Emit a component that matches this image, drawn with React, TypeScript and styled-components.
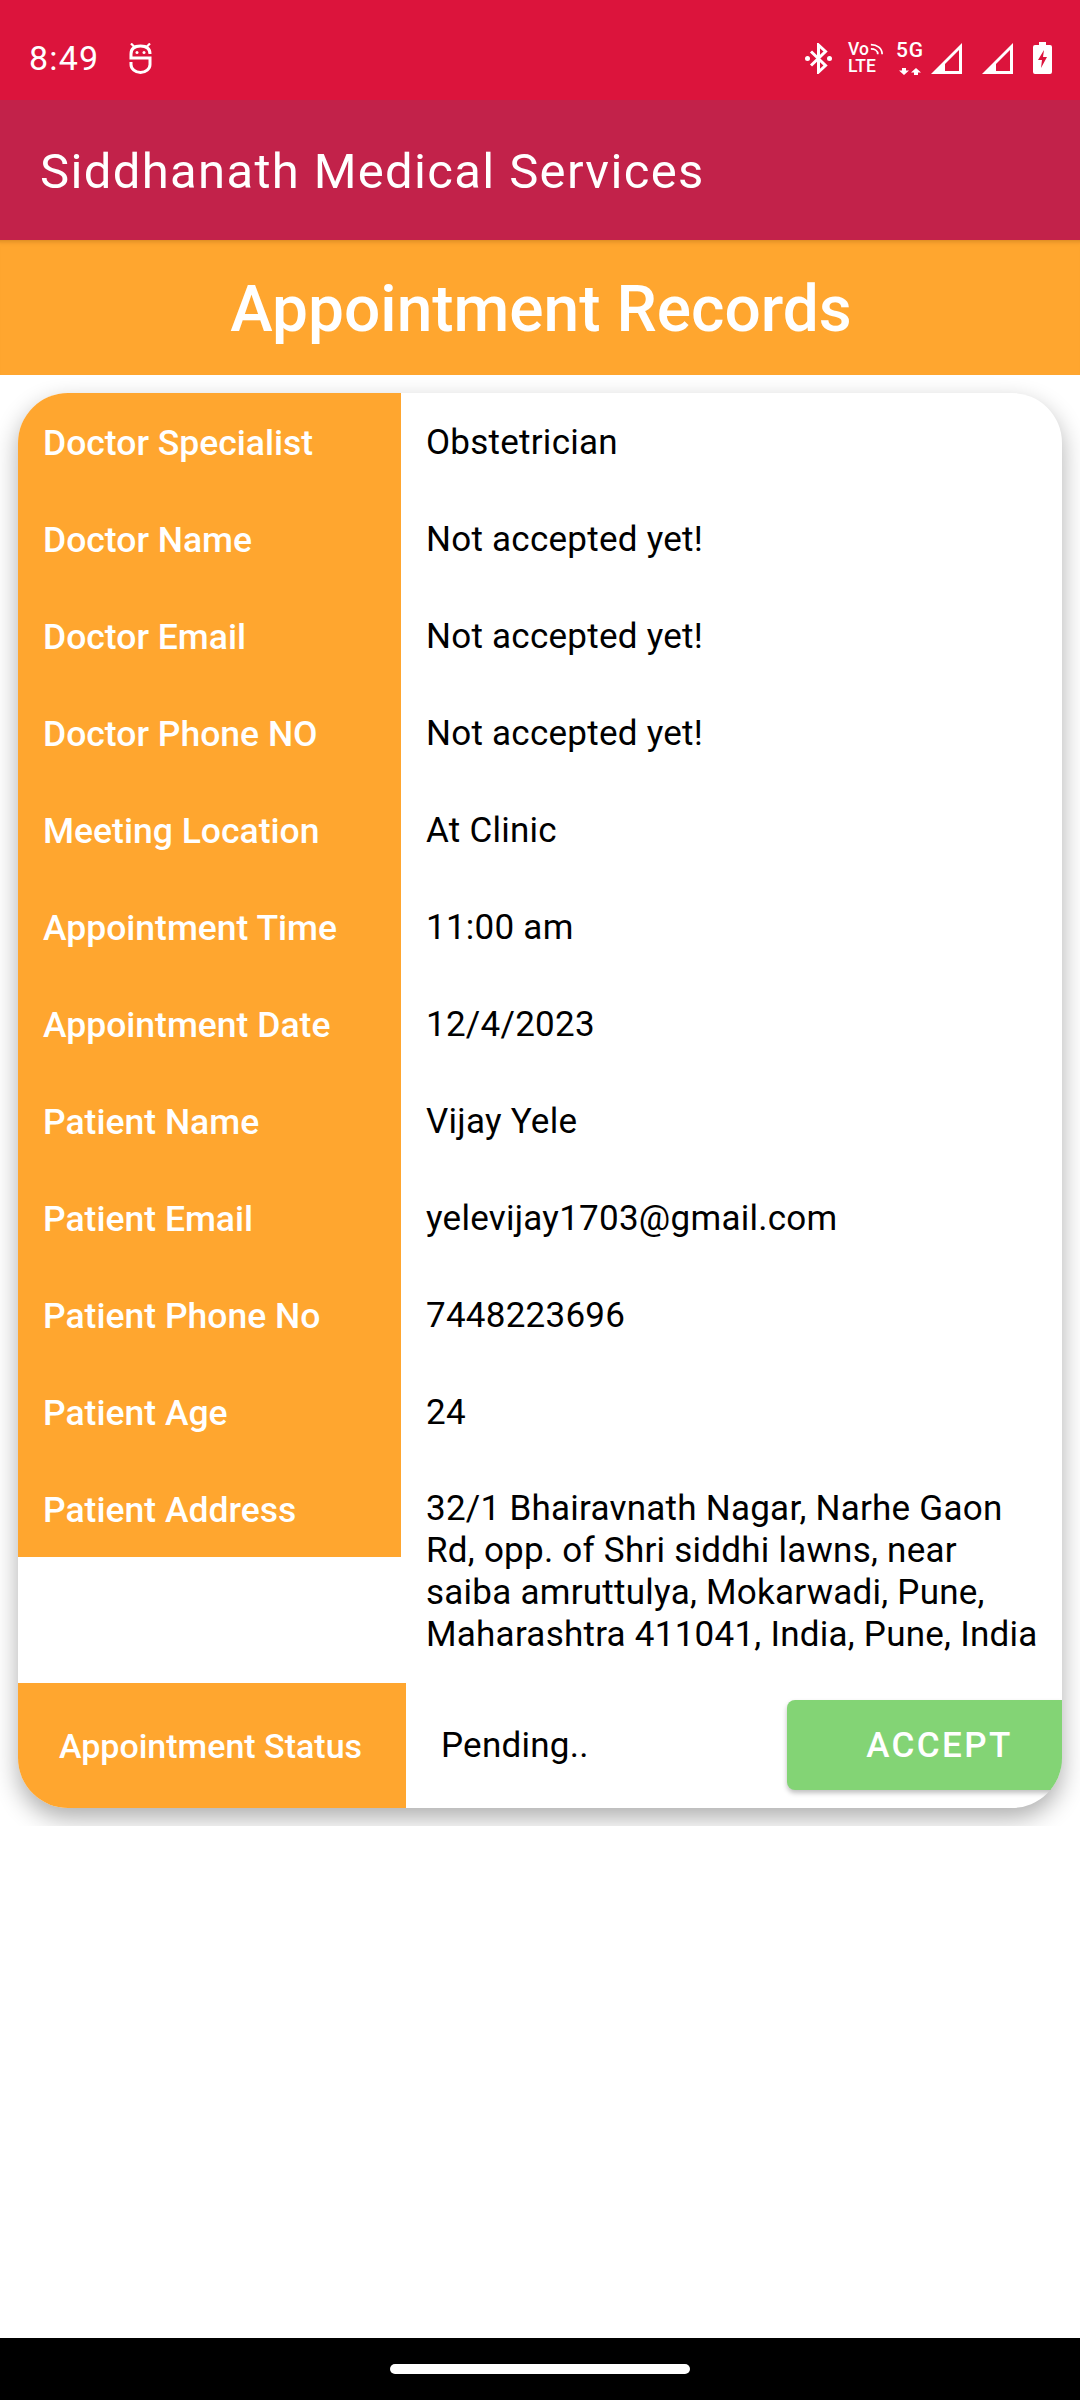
import styled, { createGlobalStyle } from 'styled-components'

const GlobalStyle = createGlobalStyle`
  html, body {
    margin: 0;
    padding: 0;
    background: #fff;
    font-family: 'Roboto', 'Liberation Sans', sans-serif;
  }
  * {
    box-sizing: border-box;
  }
`

const Screen = styled.div`
  width: 1080px;
  height: 2400px;
  display: flex;
  flex-direction: column;
  background: #fff;
`

const StatusBar = styled.div`
  height: 100px;
  flex: none;
  background: #dc143c;
  color: #fff;
  display: flex;
  align-items: center;
  padding: 16px 28px 0 29px;
`

const Clock = styled.span`
  font-size: 34px;
  letter-spacing: 1.2px;
  margin-right: 30px;
`

const StatusRight = styled.div`
  margin-left: auto;
  display: flex;
  align-items: center;
`

const IconSlot = styled.div<{ $left?: number }>`
  display: flex;
  margin-left: ${(p) => p.$left ?? 0}px;
`

const VoLte = styled.div`
  width: 35px;
  display: flex;
  flex-direction: column;
  gap: 2px;
  font-size: 17.5px;
  font-weight: 500;
  line-height: 15px;
  white-space: nowrap;
`

const VoLine = styled.div`
  display: flex;
  align-items: flex-start;
  justify-content: space-between;
`

const FiveG = styled.div`
  width: 30px;
  display: flex;
  flex-direction: column;
  align-items: center;
  gap: 9px;
  font-size: 21px;
  font-weight: 500;
  letter-spacing: 1px;
  line-height: 17px;
`

const AppBar = styled.div`
  height: 140px;
  flex: none;
  background: #c2224a;
  display: flex;
  align-items: center;
  padding: 2px 0 0 40px;
`

const AppTitle = styled.h1`
  margin: 0;
  font-size: 49px;
  font-weight: 400;
  letter-spacing: 1.35px;
  color: #fff;
`

const TitleBar = styled.div`
  height: 135px;
  flex: none;
  background: #ffa62f;
  box-shadow: inset 0 6px 5px -5px rgba(120, 70, 0, 0.35);
  padding: 3px 0 0 2px;
  display: flex;
  align-items: center;
  justify-content: center;
`

const PageTitle = styled.h2`
  margin: 0;
  font-size: 64px;
  font-weight: 500;
  color: #fff;
`

const Content = styled.div`
  flex: none;
  height: 1451px;
  padding: 18px 18px 0;
  overflow: hidden;
`

const Card = styled.div`
  height: 1415px;
  border-radius: 50px;
  overflow: hidden;
  background: #fff;
  box-shadow: 0 10px 24px rgba(0, 0, 0, 0.32);
  display: flex;
  flex-direction: column;
`

const Row = styled.div<{ $tall?: boolean }>`
  display: flex;
  align-items: flex-start;
  height: ${(p) => (p.$tall ? '223px' : '97px')};
  flex: none;
`

const Label = styled.div`
  width: 383px;
  height: 97px;
  flex: none;
  background: #ffa62f;
  color: #fff;
  font-size: 35.5px;
  font-weight: 500;
  padding: 2px 0 0 25px;
  display: flex;
  align-items: center;
`

const Value = styled.div<{ $multi?: boolean }>`
  flex: 1;
  min-height: 97px;
  color: #000;
  font-size: 35px;
  letter-spacing: 0.25px;
  line-height: 42px;
  padding: ${(p) => (p.$multi ? '28px' : '2px')} 20px 0 25px;
  display: flex;
  align-items: ${(p) => (p.$multi ? 'flex-start' : 'center')};
`

const StatusRow = styled.div`
  flex: 1;
  display: flex;
  align-items: center;
`

const StatusLabel = styled.div`
  width: 388px;
  height: 100%;
  flex: none;
  background: #ffa62f;
  color: #fff;
  font-size: 34px;
  font-weight: 500;
  padding-right: 3px;
  display: flex;
  align-items: center;
  justify-content: center;
`

const StatusValue = styled.div`
  flex: 1;
  padding-left: 35px;
  color: #000;
  font-size: 35px;
  letter-spacing: 0.25px;
`

const AcceptButton = styled.button`
  width: 275px;
  height: 90px;
  flex: none;
  margin-bottom: 1px;
  border: 0;
  border-radius: 8px 0 0 8px;
  background: #83d475;
  color: #fff;
  font-family: inherit;
  font-size: 35px;
  font-weight: 500;
  letter-spacing: 2.4px;
  padding: 0 0 0 30px;
  box-shadow: 0 3px 5px rgba(0, 0, 0, 0.25);
`

const Spacer = styled.div`
  flex: 1;
`

const NavBar = styled.div`
  height: 62px;
  flex: none;
  background: #000;
  display: flex;
  align-items: center;
  justify-content: center;
`

const NavHandle = styled.div`
  width: 300px;
  height: 10px;
  border-radius: 5px;
  background: #fff;
`

const RobotIcon = () => (
  <svg width="23" height="31" viewBox="0 0 23 31" fill="none" stroke="#fff" strokeWidth="3">
    <path d="M21 11C21 5.5 17 3 11.5 3S2 5.5 2 11V15H21V21.5A9.5 8 0 0 1 2 21.5V19" />
    <path d="M2 0.5L5 3.5M21 0.5L18 3.5" strokeWidth="2.2" />
    <circle cx="8" cy="9.5" r="1.5" fill="#fff" stroke="none" />
    <circle cx="15" cy="9.5" r="1.5" fill="#fff" stroke="none" />
  </svg>
)

const BluetoothIcon = () => (
  <svg width="27" height="31" viewBox="0 0 27 31" fill="none" stroke="#fff" strokeWidth="3">
    <path d="M6 8.5L20.5 22.5L13.5 29V2L20.5 8.5L6 22.5" />
    <circle cx="2.5" cy="15.5" r="2.5" fill="#fff" stroke="none" />
    <circle cx="24.5" cy="15.5" r="2.5" fill="#fff" stroke="none" />
  </svg>
)

const VoArcs = () => (
  <svg width="13" height="13" viewBox="0 0 15 13" fill="none" stroke="#fff" strokeWidth="2">
    <path d="M1 2C8 2 14 6 14 13M1 7C5 7 9 9 9 13" />
  </svg>
)

const FiveGArrows = () => (
  <svg width="22" height="7" viewBox="0 0 22 7" fill="#fff">
    <path d="M5 7L0 2.5H3V0H7V2.5H10Z" />
    <path d="M17 0L22 4.5H19V7H15V4.5H12Z" />
  </svg>
)

const SignalIcon = () => (
  <svg width="31" height="31" viewBox="0 0 31 31">
    <path d="M31 0V31H0Z" fill="#fff" />
    <path d="M28 7V28H14V21Z" fill="#dc143c" />
  </svg>
)

const BatteryIcon = () => (
  <svg width="19" height="32" viewBox="0 0 19 32">
    <path d="M6 0H13V3H17Q19 3 19 5V30Q19 32 17 32H2Q0 32 0 30V5Q0 3 2 3H6Z" fill="#fff" />
    <path d="M11 8L5 18H9L8 26L14 15H10Z" fill="#dc143c" />
  </svg>
)

const records = [
  ['Doctor Specialist', 'Obstetrician'],
  ['Doctor Name', 'Not accepted yet!'],
  ['Doctor Email', 'Not accepted yet!'],
  ['Doctor Phone NO', 'Not accepted yet!'],
  ['Meeting Location', 'At Clinic'],
  ['Appointment Time', '11:00 am'],
  ['Appointment Date', '12/4/2023'],
  ['Patient Name', 'Vijay Yele'],
  ['Patient Email', 'yelevijay1703@gmail.com'],
  ['Patient Phone No', '7448223696'],
  ['Patient Age', '24'],
]

function App() {
  return (
    <Screen>
      <GlobalStyle />
      <StatusBar>
        <Clock>8:49</Clock>
        <RobotIcon />
        <StatusRight>
          <IconSlot>
            <BluetoothIcon />
          </IconSlot>
          <IconSlot $left={16}>
            <VoLte>
              <VoLine>
                Vo
                <VoArcs />
              </VoLine>
              LTE
            </VoLte>
          </IconSlot>
          <IconSlot $left={12}>
            <FiveG>
              5G
              <FiveGArrows />
            </FiveG>
          </IconSlot>
          <IconSlot $left={6}>
            <SignalIcon />
          </IconSlot>
          <IconSlot $left={20}>
            <SignalIcon />
          </IconSlot>
          <IconSlot $left={20}>
            <BatteryIcon />
          </IconSlot>
        </StatusRight>
      </StatusBar>
      <AppBar>
        <AppTitle>Siddhanath Medical Services</AppTitle>
      </AppBar>
      <TitleBar>
        <PageTitle>Appointment Records</PageTitle>
      </TitleBar>
      <Content>
        <Card>
          {records.map(([label, value]) => (
            <Row key={label}>
              <Label>{label}</Label>
              <Value>{value}</Value>
            </Row>
          ))}
          <Row $tall>
            <Label>Patient Address</Label>
            <Value $multi>
              32/1 Bhairavnath Nagar, Narhe Gaon Rd, opp. of Shri siddhi lawns, near saiba amruttulya, Mokarwadi, Pune,
              Maharashtra 411041, India, Pune, India
            </Value>
          </Row>
          <StatusRow>
            <StatusLabel>Appointment Status</StatusLabel>
            <StatusValue>Pending..</StatusValue>
            <AcceptButton>ACCEPT</AcceptButton>
          </StatusRow>
        </Card>
      </Content>
      <Spacer />
      <NavBar>
        <NavHandle />
      </NavBar>
    </Screen>
  )
}

export default App
